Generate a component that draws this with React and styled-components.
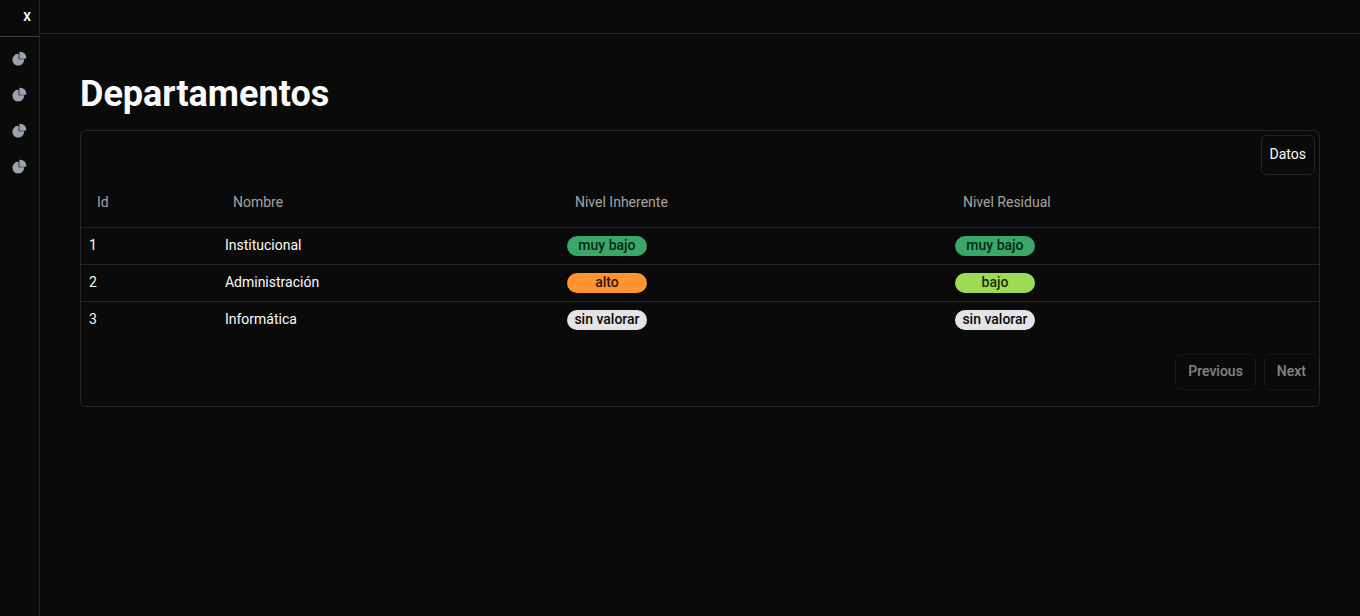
import React from "react";
import styled, { createGlobalStyle } from "styled-components";

const GlobalStyle = createGlobalStyle`
  *, *::before, *::after { box-sizing: border-box; }
  body {
    margin: 0;
    background: #0a0a0a;
    color: #fafafa;
    font-family: Roboto, "Liberation Sans", sans-serif;
    font-size: 14px;
    line-height: 20px;
  }
  button { font: inherit; color: inherit; background: transparent; cursor: pointer; }
`;

const Shell = styled.div`
  display: flex;
  min-height: 100vh;
`;

const Sidebar = styled.aside`
  flex: none;
  width: 40px;
  border-right: 1px solid #262626;
`;

const SidebarHeader = styled.div`
  display: flex;
  align-items: flex-start;
  justify-content: flex-end;
  height: 37px;
  padding: 4px 8px;
  border-bottom: 1px solid #404040;
`;

const CloseButton = styled.button`
  border: 0;
  padding: 2px 0 0;
  width: 8px;
  height: 24px;
  font-size: 12px;
  font-weight: 700;
`;

const NavList = styled.ul`
  list-style: none;
  margin: 0;
  padding: 4px 0;
`;

const NavLink = styled.a`
  display: flex;
  align-items: center;
  height: 36px;
  padding-left: 11px;
  color: #9ca3af;
`;

const Content = styled.div`
  flex: 1;
  min-width: 0;
`;

const TopBar = styled.header`
  height: 34px;
  border-bottom: 1px solid #262626;
`;

const Main = styled.main`
  padding: 40px;
`;

const Title = styled.h1`
  margin: 0 0 16px;
  font-size: 36px;
  line-height: 40px;
  font-weight: 700;
`;

const Card = styled.section`
  border: 1px solid #262626;
  border-radius: 6px;
`;

const Toolbar = styled.div`
  display: flex;
  justify-content: flex-end;
  padding: 4px;
`;

const DataButton = styled.button`
  height: 40px;
  padding: 0 8px 2px;
  border: 1px solid #262626;
  border-radius: 6px;
`;

const Table = styled.table`
  width: 100%;
  table-layout: fixed;
  border-collapse: collapse;
`;

const HeadCell = styled.th`
  width: ${(p) => p.$width};
  height: 48px;
  padding: 0 16px 2px;
  text-align: left;
  vertical-align: middle;
  font-weight: 400;
  color: #a3a3a3;
`;

const Row = styled.tr`
  border-top: 1px solid #262626;
`;

const Cell = styled.td`
  height: 37px;
  padding: 8px;
  line-height: 18px;
  vertical-align: top;
`;

const levels = {
  "muy bajo": ["#38a768", "#082616"],
  bajo: ["#9bdb56", "#1c3009"],
  alto: ["#ff9430", "#2e1804"],
  "sin valorar": ["#e4e4e7", "#0a0a0a"],
};

const Badge = styled.div`
  width: 80px;
  height: 20px;
  border-radius: 10px;
  line-height: 18px;
  text-align: center;
  font-weight: 500;
  background: ${(p) => levels[p.$level][0]};
  color: ${(p) => levels[p.$level][1]};
`;

const Pagination = styled.div`
  display: flex;
  justify-content: flex-end;
  gap: 8px;
  padding: 16px 0;
`;

const PageButton = styled.button`
  height: 36px;
  padding: 0 12px 2px;
  border: 1px solid #262626;
  border-radius: 6px;
  font-weight: 500;
  &:disabled { opacity: 0.5; cursor: default; }
`;

const PieIcon = () => (
  <svg width="16" height="16" viewBox="-1 -1 23 23" fill="currentColor" aria-hidden="true">
    <path d="M16.975 11H10V4.025a1 1 0 0 0-1.066-.998 8.5 8.5 0 1 0 9.039 9.039.999.999 0 0 0-1-1.066h.002Z" />
    <path d="M12.5 0c-.157 0-.311.01-.565.027A1 1 0 0 0 11 1.02V10h8.975a1 1 0 0 0 1-.935c.013-.188.028-.374.028-.565A8.51 8.51 0 0 0 12.5 0Z" />
  </svg>
);

const columns = [
  ["Id", "10.98%"],
  ["Nombre", "27.63%"],
  ["Nivel Inherente", "31.34%"],
  ["Nivel Residual", "30.05%"],
];

const rows = [
  { id: 1, name: "Institucional", inherent: "muy bajo", residual: "muy bajo" },
  { id: 2, name: "Administración", inherent: "alto", residual: "bajo" },
  { id: 3, name: "Informática", inherent: "sin valorar", residual: "sin valorar" },
];

const links = ["Panel", "Departamentos", "Riesgos", "Controles"];

export default function App() {
  return (
    <>
      <GlobalStyle />
      <Shell>
        <Sidebar>
          <SidebarHeader>
            <CloseButton type="button">X</CloseButton>
          </SidebarHeader>
          <nav>
            <NavList>
              {links.map((label) => (
                <li key={label}>
                  <NavLink href="#" aria-label={label}><PieIcon /></NavLink>
                </li>
              ))}
            </NavList>
          </nav>
        </Sidebar>
        <Content>
          <TopBar />
          <Main>
            <Title>Departamentos</Title>
            <Card>
              <Toolbar>
                <DataButton type="button">Datos</DataButton>
              </Toolbar>
              <Table>
                <thead>
                  <tr>
                    {columns.map(([label, width]) => (
                      <HeadCell key={label} scope="col" $width={width}>{label}</HeadCell>
                    ))}
                  </tr>
                </thead>
                <tbody>
                  {rows.map((row) => (
                    <Row key={row.id}>
                      <Cell>{row.id}</Cell>
                      <Cell>{row.name}</Cell>
                      <Cell><Badge $level={row.inherent}>{row.inherent}</Badge></Cell>
                      <Cell><Badge $level={row.residual}>{row.residual}</Badge></Cell>
                    </Row>
                  ))}
                </tbody>
              </Table>
              <Pagination>
                <PageButton type="button" disabled>Previous</PageButton>
                <PageButton type="button" disabled>Next</PageButton>
              </Pagination>
            </Card>
          </Main>
        </Content>
      </Shell>
    </>
  );
}
